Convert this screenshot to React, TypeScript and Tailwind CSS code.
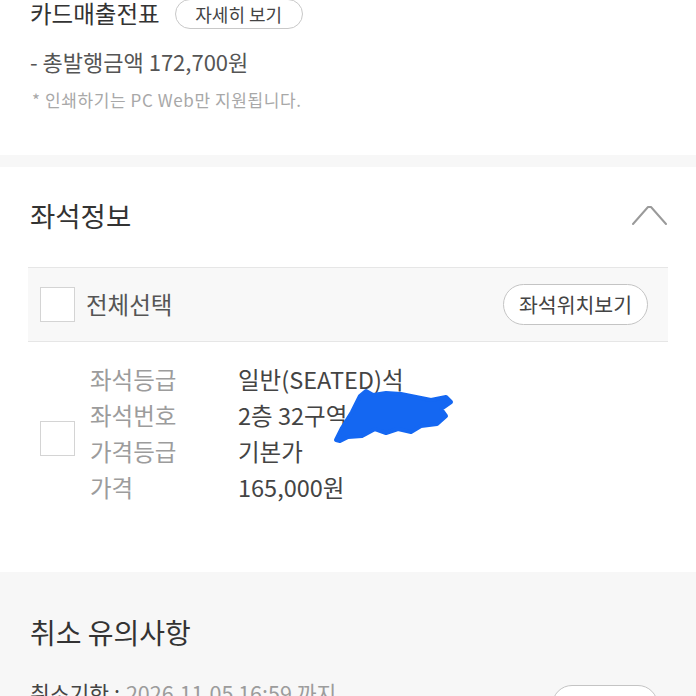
import React from "react";

const font = { fontFamily: '"Noto Sans CJK KR", "Noto Sans", sans-serif' };

function Box() {
  return <div className="w-[35px] h-[35px] border border-[#d4d4d4] bg-white shrink-0" />;
}

export default function App() {
  const rows: [string, string][] = [
    ["좌석등급", "일반(SEATED)석"],
    ["좌석번호", "2층 32구역"],
    ["가격등급", "기본가"],
    ["가격", "165,000원"],
  ];
  return (
    <div className="w-[696px] h-[696px] overflow-hidden bg-white relative" style={font}>
      {/* section 1 */}
      <div className="px-[30px] pb-[43px]">
        <div className="-mt-[1px] h-[30px] flex items-center">
          <span className="text-[23.5px] leading-none text-[#333]">카드매출전표</span>
          <div className="ml-[15px] h-[30px] w-[128px] rounded-full border border-[#c8c8c8] flex items-center justify-center text-[18px] text-[#444] bg-white">
            자세히 보기
          </div>
        </div>
        <div className="mt-[18px] text-[22px] leading-[28px] text-[#555]">- 총발행금액 172,700원</div>
        <div className="mt-[13px] ml-[2px] text-[17px] tracking-[0.6px] leading-[24px] text-[#a8a8a8]">* 인쇄하기는 PC Web만 지원됩니다.</div>
      </div>
      <div className="h-[12px] bg-[#f7f7f7]" />

      {/* section 2 */}
      <div className="pt-[30px] pb-[66px]">
        <div className="h-[36px] px-[30px] flex items-center justify-between">
          <span className="text-[27.5px] leading-[36px] text-[#333]">좌석정보</span>
          <svg width="35" height="22" viewBox="0 0 35 22" className="-mr-[1px]">
            <polyline points="1,20 16,3 19,3 34,20" fill="none" stroke="#9a9a9a" strokeWidth="2" strokeLinejoin="round" strokeLinecap="round" />
          </svg>
        </div>
        <div className="mx-[28px] mt-[34px]">
          <div className="h-[75px] border-y border-[#e6e6e6] bg-[#f8f8f8] flex items-center pl-[12px] pr-[20px]">
            <Box />
            <span className="ml-[11px] text-[23.5px] text-[#555]">전체선택</span>
            <div className="ml-auto h-[41px] w-[145px] rounded-full border border-[#c4c4c4] bg-white flex items-center justify-center text-[20.5px] text-[#444]">
              좌석위치보기
            </div>
          </div>
          <div className="flex items-center pl-[12px] pt-[20px]">
            <div className="mt-[8px]">
              <Box />
            </div>
            <div className="ml-[15px]">
              {rows.map(([k, v]) => (
                <div key={k} className="flex h-[36px] items-center text-[23.5px]">
                  <span className="w-[148px] text-[#9c9c9c]">{k}</span>
                  <span className="text-[#444]">{v}</span>
                </div>
              ))}
            </div>
          </div>
        </div>
      </div>

      {/* section 3 */}
      <div className="bg-[#f7f7f7] h-[200px] px-[30px] pt-[42px]">
        <div className="text-[28px] leading-[36px] text-[#333]">취소 유의사항</div>
        <div className="mt-[27px] flex items-start">
          <span className="text-[21.5px] leading-[32px] text-[#444]">취소기한 :</span>
          <span className="ml-[6px] text-[21.5px] leading-[32px] text-[#9c9c9c]">2026.11.05 16:59 까지</span>
          <div className="ml-auto mr-[8px] mt-[8px] h-[40px] w-[106px] rounded-full border border-[#c4c4c4] bg-white" />
        </div>
      </div>

      {/* blue scribble overlay */}
      <svg className="absolute left-0 top-0 pointer-events-none" width="696" height="696" viewBox="0 0 696 696">
        <path
          d="M336,440 L342,428 L352,412 L360,396 L366,391 L373,395 L386,393 L401,394 L416,397 L431,400 L446,397 L451,402 L441,409 L446,416 L437,424 L421,426 L411,432 L398,429 L386,433 L375,429 L362,436 L348,437 L340,441 Z"
          fill="#1467f2"
          stroke="#1467f2"
          strokeWidth="4"
          strokeLinejoin="round"
        />
      </svg>
    </div>
  );
}
